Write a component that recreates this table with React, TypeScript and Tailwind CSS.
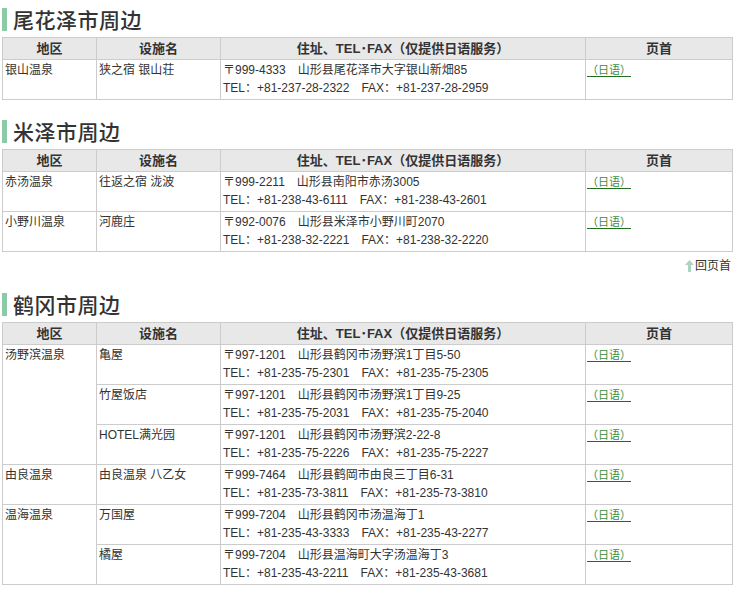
import React from "react";

type Row = { area?: string; span?: number; name: string; addr: string; tel: string };

const FONT = { fontFamily: '"Liberation Sans", "Noto Sans CJK SC", sans-serif' };

function Heading({ text, mt }: { text: string; mt: string }) {
  return (
    <div className={`flex items-center h-[24px] mb-[6px] ${mt}`}>
      <div className="w-[5px] h-[23px] bg-[#8ccaa6]" />
      <div
        className="ml-[6px] text-[21px] leading-[24px] text-[#333] font-medium tracking-[0.5px]"
        style={{ fontFamily: '"Noto Sans CJK SC", sans-serif' }}
      >
        {text}
      </div>
    </div>
  );
}

function Table({ rows }: { rows: Row[] }) {
  const th = "border border-[#cccccc] bg-[#e8e8e8] text-[13px] font-bold text-[#333] text-center align-middle p-0";
  const td = "border border-[#cccccc] align-top text-[12px] leading-[18px] text-[#333] px-[2px] pt-[1px] pb-0";
  return (
    <table className="border-collapse w-[730px] table-fixed" style={FONT}>
      <colgroup>
        <col className="w-[94px]" />
        <col className="w-[124px]" />
        <col className="w-[365px]" />
        <col className="w-[147px]" />
      </colgroup>
      <thead>
        <tr className="h-[22px]">
          <th className={th}>地区</th>
          <th className={th}>设施名</th>
          <th className={th}>住址、TEL･FAX（仅提供日语服务）</th>
          <th className={th}>页首</th>
        </tr>
      </thead>
      <tbody>
        {rows.map((r, i) => (
          <tr key={i} className="h-[40px]">
            {r.area !== undefined && (
              <td className={td} rowSpan={r.span ?? 1}>
                {r.area}
              </td>
            )}
            <td className={td}>{r.name}</td>
            <td className={td}>
              <div>{r.addr}</div>
              <div>{r.tel}</div>
            </td>
            <td className={td}>
              <a className="text-[11px] text-[#3d8f3d] underline decoration-[#1f6e1f] underline-offset-[2px] ml-[-1px]">
                （日语）
              </a>
            </td>
          </tr>
        ))}
      </tbody>
    </table>
  );
}

const S = "\u3000";

const t1: Row[] = [
  {
    area: "银山温泉",
    name: "狭之宿 银山荘",
    addr: `〒999-4333${S}山形县尾花泽市大字银山新畑85`,
    tel: `TEL：+81-237-28-2322${S}FAX：+81-237-28-2959`,
  },
];

const t2: Row[] = [
  {
    area: "赤汤温泉",
    name: "往返之宿 泷波",
    addr: `〒999-2211${S}山形县南阳市赤汤3005`,
    tel: `TEL：+81-238-43-6111${S}FAX：+81-238-43-2601`,
  },
  {
    area: "小野川温泉",
    name: "河鹿庄",
    addr: `〒992-0076${S}山形县米泽市小野川町2070`,
    tel: `TEL：+81-238-32-2221${S}FAX：+81-238-32-2220`,
  },
];

const t3: Row[] = [
  {
    area: "汤野滨温泉",
    span: 3,
    name: "亀屋",
    addr: `〒997-1201${S}山形县鹤冈市汤野滨1丁目5-50`,
    tel: `TEL：+81-235-75-2301${S}FAX：+81-235-75-2305`,
  },
  {
    name: "竹屋饭店",
    addr: `〒997-1201${S}山形县鹤冈市汤野滨1丁目9-25`,
    tel: `TEL：+81-235-75-2031${S}FAX：+81-235-75-2040`,
  },
  {
    name: "HOTEL满光园",
    addr: `〒997-1201${S}山形县鹤冈市汤野滨2-22-8`,
    tel: `TEL：+81-235-75-2226${S}FAX：+81-235-75-2227`,
  },
  {
    area: "由良温泉",
    name: "由良温泉 八乙女",
    addr: `〒999-7464${S}山形县鹤岡市由良三丁目6-31`,
    tel: `TEL：+81-235-73-3811${S}FAX：+81-235-73-3810`,
  },
  {
    area: "温海温泉",
    span: 2,
    name: "万国屋",
    addr: `〒999-7204${S}山形县鹤冈市汤温海丁1`,
    tel: `TEL：+81-235-43-3333${S}FAX：+81-235-43-2277`,
  },
  {
    name: "橘屋",
    addr: `〒999-7204${S}山形县温海町大字汤温海丁3`,
    tel: `TEL：+81-235-43-2211${S}FAX：+81-235-43-3681`,
  },
];

export default function App() {
  return (
    <div className="bg-white w-[735px] h-[591px] pl-[2px] pt-[7px] overflow-hidden">
      <Heading text="尾花泽市周边" mt="" />
      <Table rows={t1} />
      <Heading text="米泽市周边" mt="mt-[19px]" />
      <Table rows={t2} />
      <div className="flex justify-end items-center h-[18px] mt-[5px] w-[730px] pr-[1px]">
        <svg width="9" height="12" viewBox="0 0 9 12" className="mr-[1px]">
          <path d="M4.5 0 L9 5 L6 5 L6 12 L3 12 L3 5 L0 5 Z" fill="#a8d6c0" />
        </svg>
        <span className="text-[12px] text-[#333]" style={FONT}>
          回页首
        </span>
      </div>
      <Heading text="鹤冈市周边" mt="mt-[17px]" />
      <Table rows={t3} />
    </div>
  );
}
